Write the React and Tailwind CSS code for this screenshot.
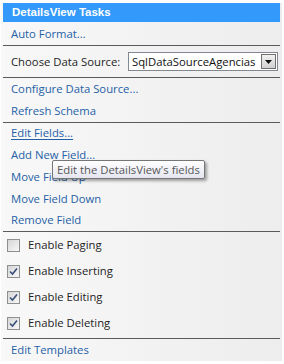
import React from "react";

const linkCls = "text-[#1f5fa6] leading-none whitespace-nowrap";

function Sep() {
  return <div className="mx-[2px] h-px bg-[#5a5a5a]" />;
}

function Row({ h, children }) {
  return (
    <div className="flex items-center pl-[10px]" style={{ height: h }}>
      {children}
    </div>
  );
}

function Check({ checked, label }) {
  return (
    <div className="flex h-[26px] items-center pl-[6px]">
      <div className="flex h-[13px] w-[13px] items-center justify-center border border-[#8e8f8f] bg-gradient-to-br from-[#d6d6d6] to-[#f8f8f8]">
        {checked && (
          <svg width="9" height="9" viewBox="0 0 9 9">
            <path d="M1 4.5 L3.5 7 L8 1.5" fill="none" stroke="#3a4f7a" strokeWidth="1.6" />
          </svg>
        )}
      </div>
      <span className="ml-[8px] whitespace-nowrap leading-none text-[#1e1e1e]">{label}</span>
    </div>
  );
}

export default function App() {
  return (
    <div className="relative h-[364px] w-[284px] bg-white text-[11.3px]" style={{ fontFamily: '"Open Sans", "Noto Sans", sans-serif' }}>
      <div className="absolute left-[1px] top-[3px] h-[358px] w-[281px] bg-gradient-to-r from-[#f8f8f8] to-[#ededed]">
        <div
          className="mx-[2px] flex h-[19px] items-center bg-[#3399fb] pl-[9px] text-[11.5px] font-bold leading-none text-white"
          style={{ fontFamily: '"Liberation Sans", Arial, sans-serif' }}
        >
          DetailsView Tasks
        </div>
        <Row h={23}>
          <span className={linkCls}>Auto Format...</span>
        </Row>
        <Sep />
        <div className="flex h-[31px] items-center pl-[10px] pr-[4px]">
          <span className="whitespace-nowrap leading-none text-[#1e1e1e]">Choose Data Source:</span>
          <div className="ml-auto flex h-[19px] w-[150px] items-center border border-[#828790] bg-white pl-[3px]">
            <span className="flex-1 whitespace-nowrap leading-none text-[#111]">SqlDataSourceAgencias</span>
            <div className="mr-px flex h-[15px] w-[15px] items-center justify-center border border-[#707070] bg-gradient-to-b from-[#f2f2f2] to-[#d0d0d0]">
              <svg width="7" height="4" viewBox="0 0 7 4">
                <path d="M0 0 H7 L3.5 4 Z" fill="#111" />
              </svg>
            </div>
          </div>
        </div>
        <Sep />
        <Row h={22}>
          <span className={linkCls}>Configure Data Source...</span>
        </Row>
        <Row h={21}>
          <span className={linkCls}>Refresh Schema</span>
        </Row>
        <div className="h-px" />
        <Sep />
        <Row h={20}>
          <span className={linkCls + " underline underline-offset-2"}>Edit Fields...</span>
        </Row>
        <Row h={23}>
          <span className={linkCls}>Add New Field...</span>
        </Row>
        <Row h={22}>
          <span className={linkCls}>Move Field Up</span>
        </Row>
        <Row h={21}>
          <span className={linkCls}>Move Field Down</span>
        </Row>
        <Row h={22}>
          <span className={linkCls}>Remove Field</span>
        </Row>
        <Sep />
        <Check label="Enable Paging" />
        <Check checked label="Enable Inserting" />
        <Check checked label="Enable Editing" />
        <Check checked label="Enable Deleting" />
        <div className="h-[2px]" />
        <Sep />
        <Row h={22}>
          <span className={linkCls}>Edit Templates</span>
        </Row>
      </div>
      <div className="absolute left-[52px] top-[160px] flex h-[19px] items-center whitespace-nowrap rounded-[2px] border border-[#767676] bg-gradient-to-b from-white to-[#e4e5f0] px-[4px] leading-none text-[#575757] shadow-[2px_2px_3px_rgba(0,0,0,0.35)]">
        Edit the DetailsView's fields
      </div>
    </div>
  );
}
